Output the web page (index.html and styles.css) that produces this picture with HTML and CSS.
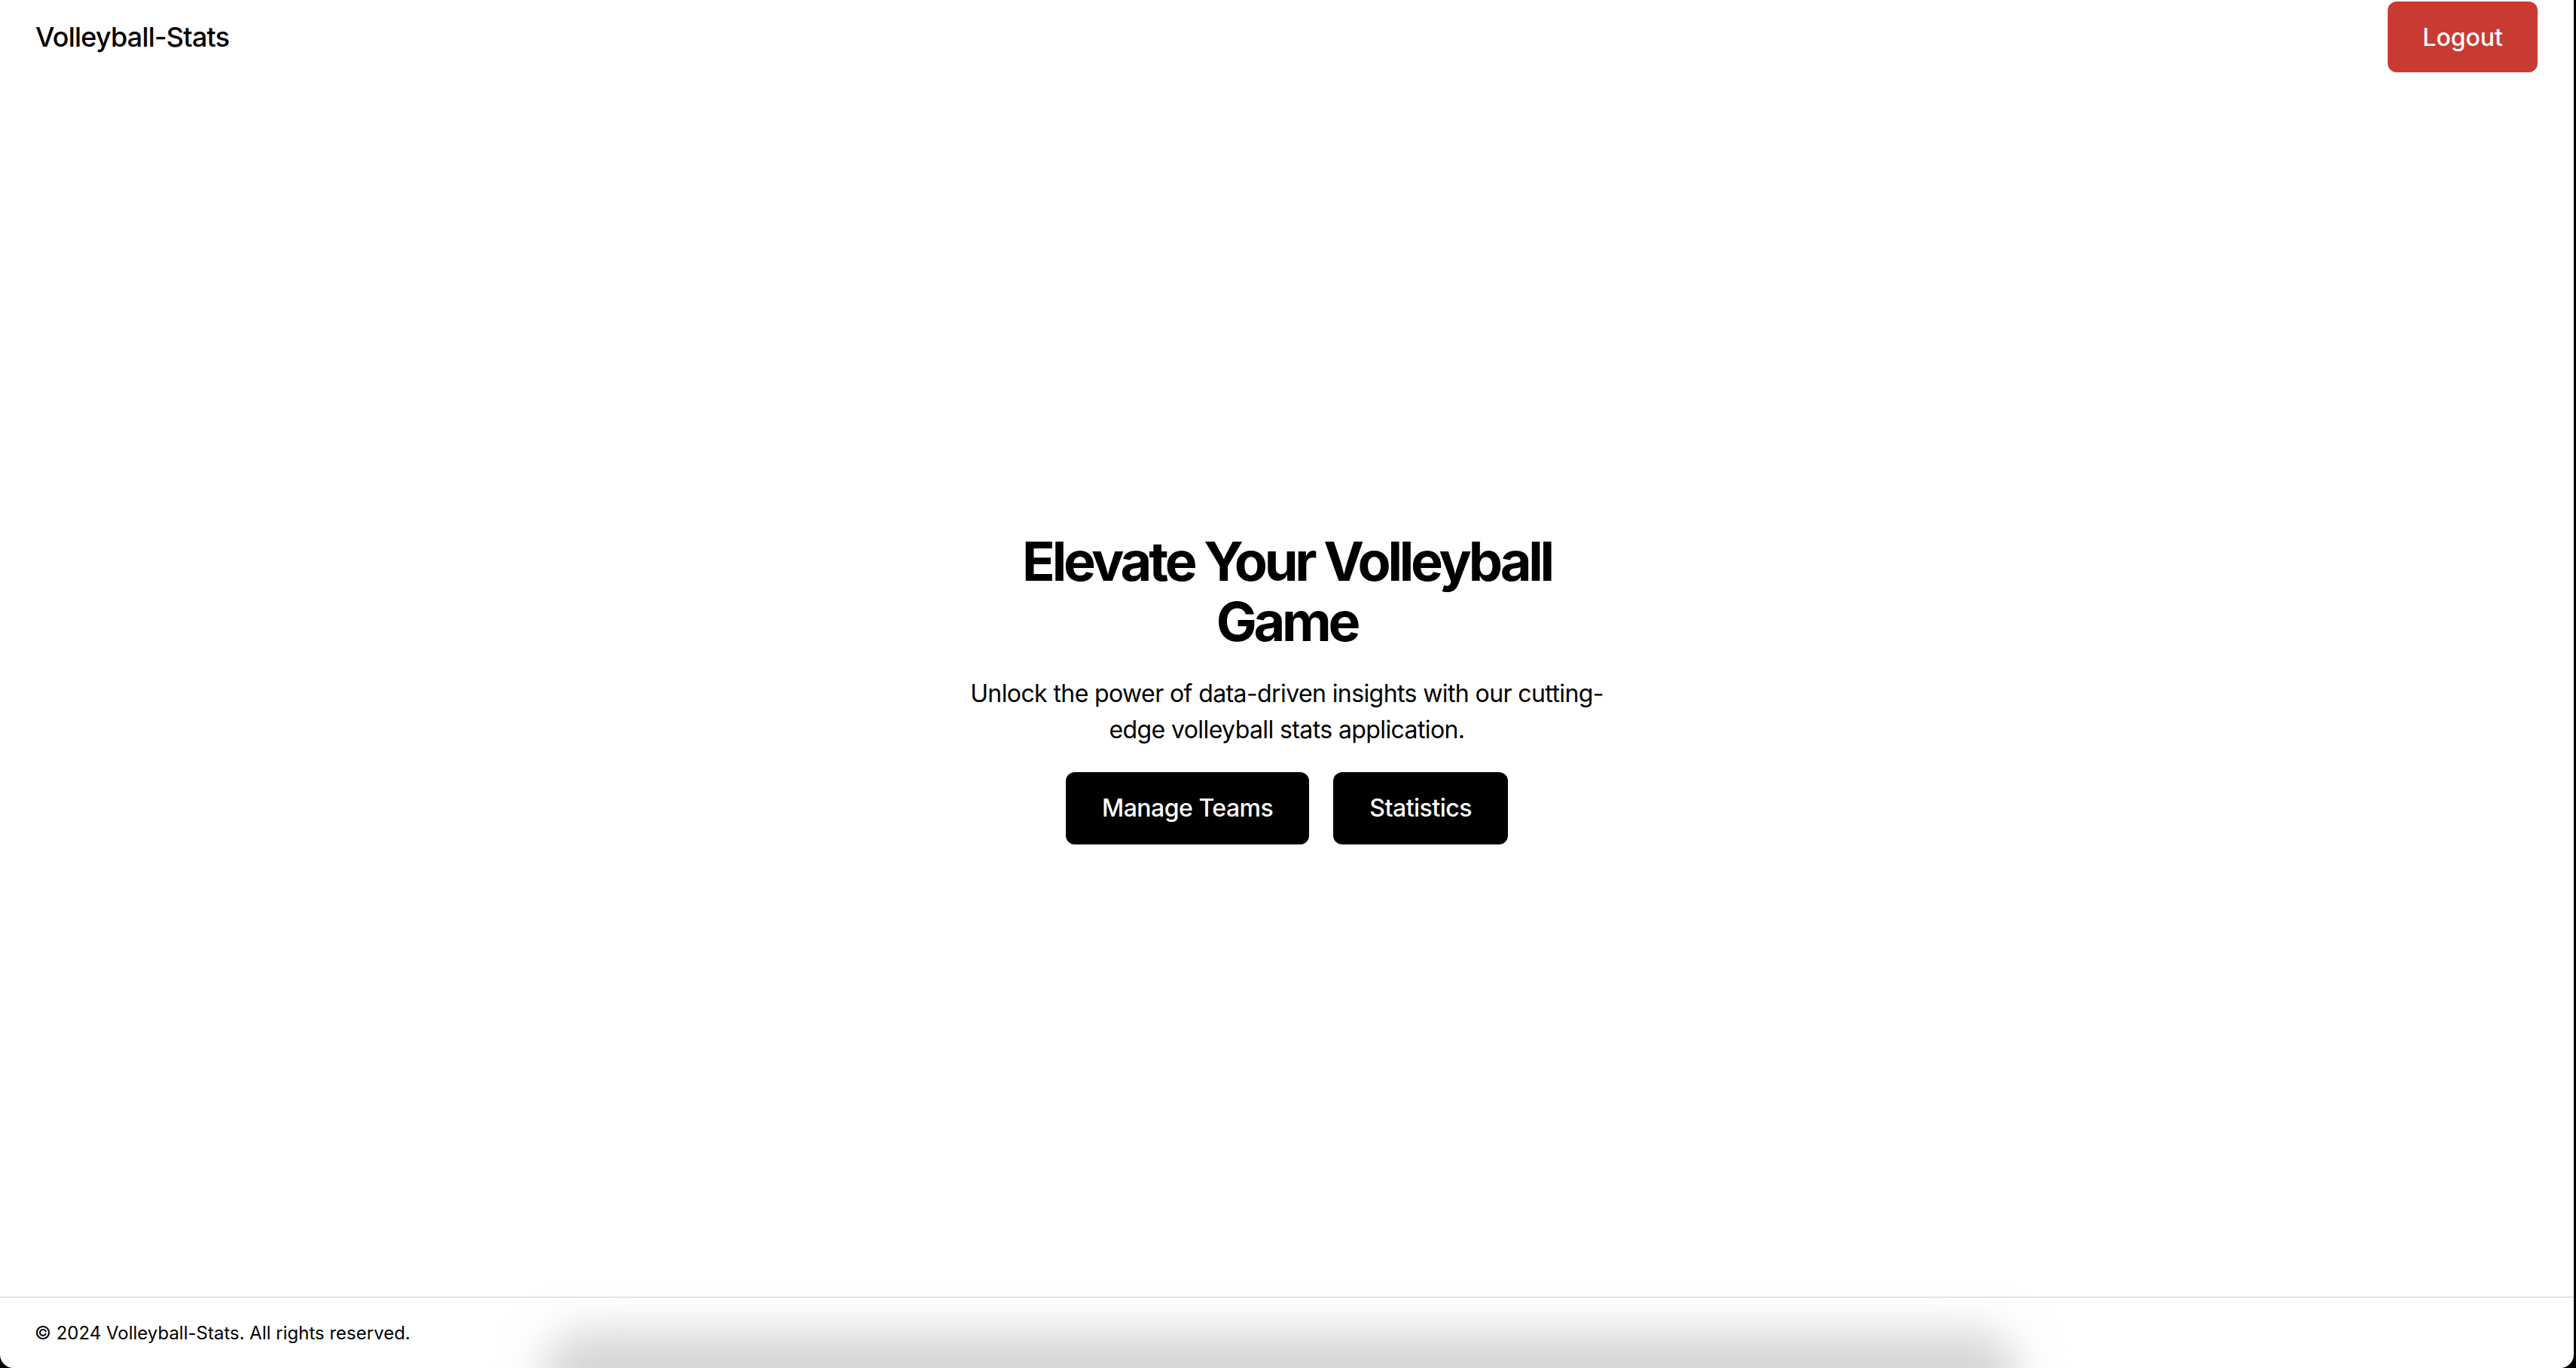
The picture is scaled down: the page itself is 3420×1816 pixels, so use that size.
FILE: index.html
```html
<!DOCTYPE html>
<html lang="en">
<head>
<meta charset="utf-8">
<title>Volleyball-Stats</title>
<link rel="stylesheet" href="styles.css">
</head>
<body>
<div class="window">
  <header class="topbar">
    <a class="brand" href="#">Volleyball-Stats</a>
    <button class="btn btn-logout">Logout</button>
  </header>
  <main class="main">
    <section class="hero">
      <h1 class="hero-title">Elevate Your Volleyball Game</h1>
      <p class="hero-text">Unlock the power of data-driven insights with our cutting-edge volleyball stats application.</p>
      <div class="hero-actions">
        <a class="btn btn-dark" href="#">Manage Teams</a>
        <a class="btn btn-dark" href="#">Statistics</a>
      </div>
    </section>
  </main>
  <footer class="footer">
    <p class="footer-text">© 2024 Volleyball-Stats. All rights reserved.</p>
  </footer>
  <div class="dock-shadow"></div>
</div>
</body>
</html>
```

FILE: styles.css
```css
* { box-sizing: border-box; }
html, body {
  margin: 0;
  padding: 0;
  background: #000;
  height: 100%;
}
body {
  font-family: Inter, "Noto Sans", "Liberation Sans", sans-serif;
  color: #000;
  overflow: hidden;
}
.window {
  position: relative;
  width: 3417px;
  height: 1816px;
  background: #fff;
  border-bottom-left-radius: 18px;
  border-bottom-right-radius: 18px;
  overflow: hidden;
  display: flex;
  flex-direction: column;
}
.topbar {
  height: 98px;
  padding: 0 48px 0 47px;
  display: flex;
  align-items: center;
  justify-content: space-between;
  flex: none;
}
.brand {
  font-size: 36px;
  font-weight: 500;
  color: #000;
  text-decoration: none;
  letter-spacing: -0.8px;
}
.btn {
  display: inline-flex;
  align-items: center;
  justify-content: center;
  font-family: inherit;
  font-size: 32px;
  font-weight: 500;
  border: none;
  border-radius: 12px;
  text-decoration: none;
  cursor: pointer;
}
.btn-logout {
  height: 94px;
  padding: 0 46px;
  background: #c93a32;
  color: #fff;
}
.main {
  flex: 1;
  display: flex;
  align-items: center;
  justify-content: center;
  padding-top: 6px;
}
.hero {
  max-width: 900px;
  text-align: center;
  display: flex;
  flex-direction: column;
  align-items: center;
}
.hero-title {
  margin: 0;
  font-size: 72px;
  line-height: 80px;
  font-weight: 700;
  letter-spacing: -4.2px;
}
.hero-text {
  margin: 32px 0 0;
  font-size: 32px;
  line-height: 48px;
  font-weight: 400;
  letter-spacing: -0.6px;
}
.hero-actions {
  margin-top: 32px;
  display: flex;
  gap: 32px;
}
.btn-dark {
  height: 96px;
  padding: 0 48px;
  background: #000;
  color: #fff;
  letter-spacing: -0.5px;
}
.footer {
  flex: none;
  border-top: 2px solid #e4e4e7;
  height: 95px;
  padding: 0 48px 0 46px;
  display: flex;
  align-items: center;
}
.footer-text {
  margin: 0;
  font-size: 24px;
  line-height: 32px;
}
.dock-shadow {
  position: absolute;
  left: 720px;
  width: 1960px;
  bottom: -70px;
  height: 120px;
  border-radius: 60px;
  background: #d6d6d6;
  filter: blur(28px);
  pointer-events: none;
}
```
